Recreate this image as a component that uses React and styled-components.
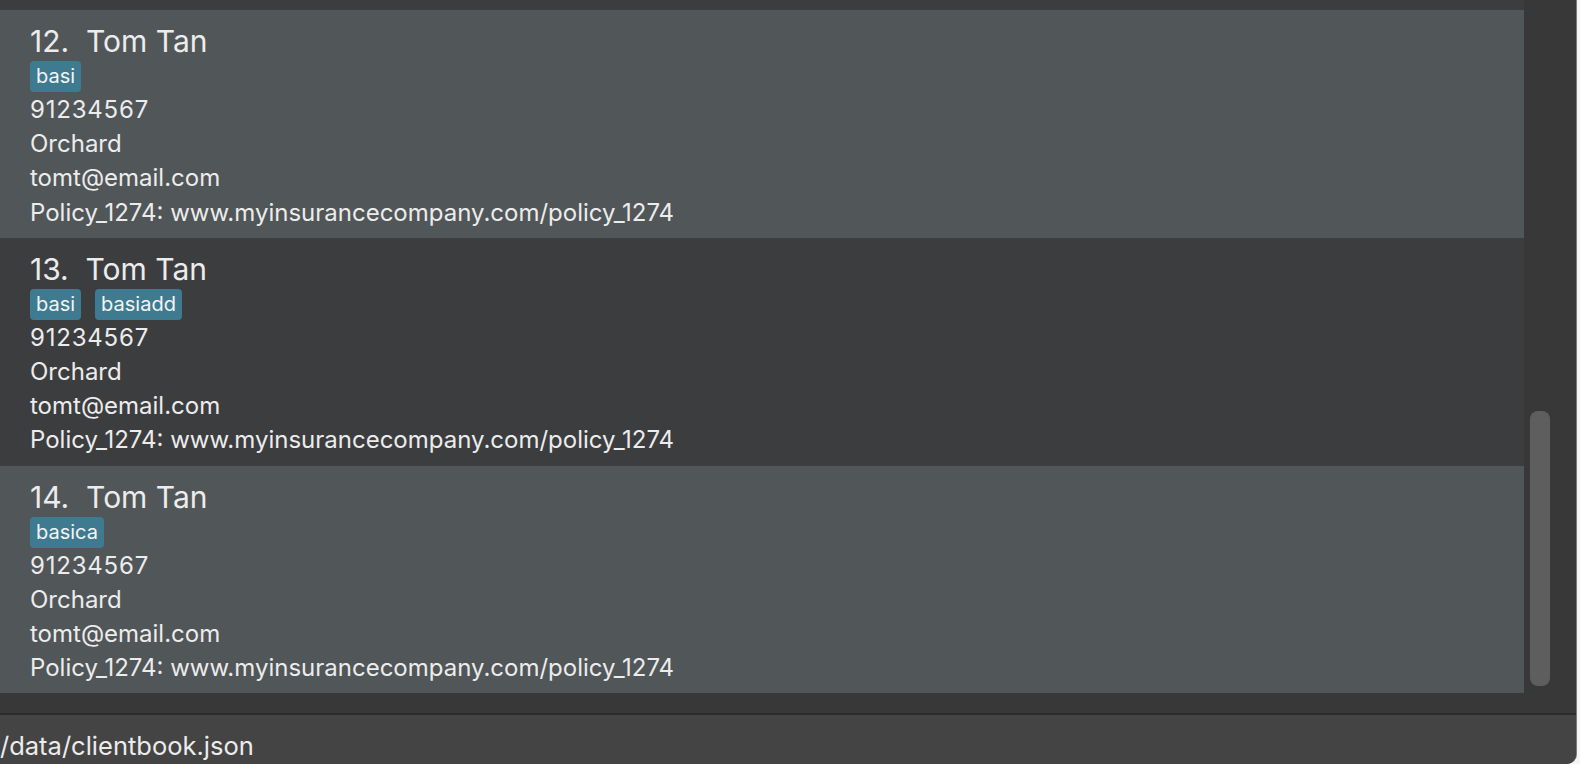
import React from 'react';
import styled, { createGlobalStyle } from 'styled-components';

const GlobalStyle = createGlobalStyle`
  html, body {
    margin: 0;
    padding: 0;
    background: #f4f4f4;
    overflow: hidden;
  }
  body {
    font-family: Inter, "Noto Sans", sans-serif;
  }
`;

// list is scrolled: only the last 10px of card 11 remain visible above
const clients = [
  { id: 12, name: 'Tom Tan', tags: ['basi'] },
  { id: 13, name: 'Tom Tan', tags: ['basi', 'basiadd'] },
  { id: 14, name: 'Tom Tan', tags: ['basica'] },
];

const App = () => {
  return (
    <>
      <GlobalStyle />
      <Window>
        <ListArea>
          <ListViewport>
            <CardTail />
            {clients.map((c, i) => (
              <Card key={c.id} $odd={i % 2 === 0}>
                <Name>{c.id}.&nbsp;&nbsp;{c.name}</Name>
                <Tags>
                  {c.tags.map((t) => (
                    <Tag key={t}>{t}</Tag>
                  ))}
                </Tags>
                <Phone>91234567</Phone>
                <Field>Orchard</Field>
                <Field>tomt@email.com</Field>
                <Field>Policy_1274: www.myinsurancecompany.com/policy_1274</Field>
              </Card>
            ))}
          </ListViewport>
          <ScrollTrack>
            <Thumb />
          </ScrollTrack>
        </ListArea>
        <StatusBar>
          <Path>/data/clientbook.json</Path>
        </StatusBar>
      </Window>
    </>
  );
};

export default App;

const Window = styled.div`
  width: 1576px;
  height: 764px;
  display: flex;
  flex-direction: column;
  background: #383838;
  border-right: 1px solid #7a7a7a;
  border-bottom-right-radius: 10px;
  overflow: hidden;
`;

const ListArea = styled.div`
  display: flex;
  height: 713px;
  border-bottom: 2px solid #2b2b2b;
`;

const ListViewport = styled.div`
  width: 1524px;
  display: flex;
  flex-direction: column;
  overflow: hidden;
`;

const CardTail = styled.div`
  height: 10px;
  flex-shrink: 0;
  background: #3c3d3f;
`;

const Card = styled.div`
  height: 227.8px;
  flex-shrink: 0;
  box-sizing: border-box;
  padding: 12px 30px 0;
  background: ${(p) => (p.$odd ? '#515658' : '#3c3d3f')};
  color: #ececec;
`;

const Name = styled.div`
  font-size: 30px;
  line-height: 38px;
  white-space: pre;
`;

const Tags = styled.div`
  display: flex;
  gap: 14px;
  padding: 1px 0 1px;
`;

const Tag = styled.span`
  background: #3e7b91;
  color: #f4f4f4;
  border-radius: 4px;
  font-size: 20px;
  line-height: 31px;
  padding: 0 6px;
`;

const Field = styled.div`
  font-size: 24px;
  line-height: 34.2px;
  white-space: nowrap;
`;

const Phone = styled(Field)`
  letter-spacing: 0.8px;
`;

const ScrollTrack = styled.div`
  flex: 1;
  position: relative;
`;

const Thumb = styled.div`
  position: absolute;
  left: 6px;
  top: 411px;
  width: 20px;
  height: 275px;
  border-radius: 8px;
  background: #5e5e5e;
`;

const StatusBar = styled.div`
  flex: 1;
  background: #444444;
  display: flex;
  align-items: center;
  padding-top: 12px;
`;

const Path = styled.div`
  color: #ececec;
  font-size: 25.5px;
  line-height: 30px;
`;
